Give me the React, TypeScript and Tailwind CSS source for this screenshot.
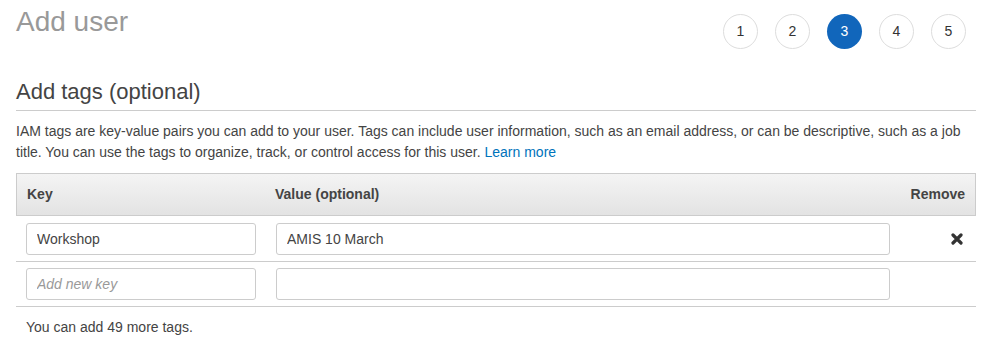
const steps = [1, 2, 3, 4, 5];

function RemoveIcon() {
  return (
    <svg width="12" height="12" viewBox="0 0 12 12" className="text-[#333]">
      <path d="M2 2 L10 10 M10 2 L2 10" stroke="currentColor" strokeWidth="3.2" strokeLinecap="round" />
    </svg>
  );
}

export default function App() {
  return (
    <div
      className="w-[988px] h-[342px] bg-white pl-4 pr-3 text-[#444] overflow-hidden"
      style={{ fontFamily: '"Liberation Sans", Arial, sans-serif' }}
    >
      <div className="flex items-start justify-between">
        <h1 className="pt-[6px] text-[28px] leading-[32px] text-[#999]">Add user</h1>
        <div className="mt-[14px] mr-[10px] flex gap-[17px]">
          {steps.map((s) => (
            <div
              key={s}
              className={
                s === 3
                  ? 'flex h-[35px] w-[35px] items-center justify-center rounded-full bg-[#1166bb] text-[14px] text-white'
                  : 'flex h-[35px] w-[35px] items-center justify-center rounded-full border border-[#dddddd] text-[14px] text-[#333]'
              }
            >
              {s}
            </div>
          ))}
        </div>
      </div>

      <h2 className="mt-[29px] border-b border-[#cccccc] pb-[5px] text-[22px] leading-[27px] text-[#444]">
        Add tags (optional)
      </h2>

      <p className="mt-[10px] text-[14px] leading-[21px] text-[#444]">
        IAM tags are key-value pairs you can add to your user. Tags can include user information, such as an email
        address, or can be descriptive, such as a job title. You can use the tags to organize, track, or control access
        for this user. <a className="text-[#0073bb]">Learn more</a>
      </p>

      <div className="mt-[10px]">
        <div className="flex h-[43px] items-center border border-[#cccccc] bg-gradient-to-b from-[#f4f4f4] to-[#e3e3e3] text-[14px] font-bold text-[#444]">
          <div className="w-[249px] pl-[10px]">Key</div>
          <div className="flex-1 pl-[9px]">Value (optional)</div>
          <div className="w-[76px] pr-[10px] text-right">Remove</div>
        </div>

        <div className="flex h-[46px] items-center border-b border-[#cccccc]">
          <div className="w-[250px] pl-[10px]">
            <input
              readOnly
              value="Workshop"
              className="h-[32px] w-[230px] rounded-[3px] border border-[#cccccc] px-[10px] text-[14px] text-[#444] outline-none"
            />
          </div>
          <div className="flex-1 pl-[10px]">
            <input
              readOnly
              value="AMIS 10 March"
              className="h-[32px] w-[614px] rounded-[3px] border border-[#cccccc] px-[10px] text-[14px] text-[#444] outline-none"
            />
          </div>
          <div className="flex w-[76px] justify-end pr-[13px]">
            <RemoveIcon />
          </div>
        </div>

        <div className="flex h-[45px] items-center border-b border-[#cccccc]">
          <div className="w-[250px] pl-[10px]">
            <input
              readOnly
              placeholder="Add new key"
              className="h-[32px] w-[230px] rounded-[3px] border border-[#cccccc] px-[10px] text-[14px] text-[#444] outline-none placeholder:italic placeholder:text-[#999]"
            />
          </div>
          <div className="flex-1 pl-[10px]">
            <input
              readOnly
              className="h-[32px] w-[614px] rounded-[3px] border border-[#cccccc] px-[10px] text-[14px] text-[#444] outline-none"
            />
          </div>
          <div className="w-[76px]" />
        </div>
      </div>

      <p className="mt-[11px] pl-[10px] text-[14px] leading-[18px] text-[#444]">You can add 49 more tags.</p>
    </div>
  );
}
